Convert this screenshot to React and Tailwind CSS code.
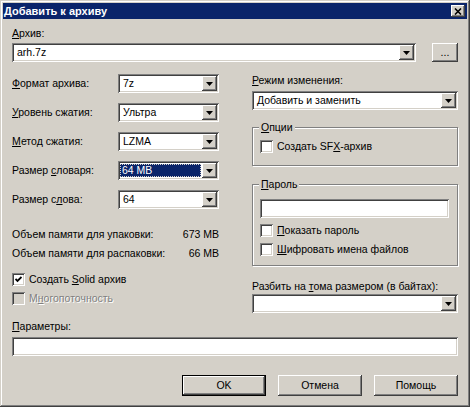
import React from "react";

// classic win2000 3d edges
const sunken =
  "shadow-[inset_1px_1px_0_#808080,inset_-1px_-1px_0_#ffffff,inset_2px_2px_0_#404040,inset_-2px_-2px_0_#d4d0c8]";
const raised =
  "shadow-[inset_-1px_-1px_0_#404040,inset_1px_1px_0_#ffffff,inset_-2px_-2px_0_#808080,inset_2px_2px_0_#d4d0c8]";

const Arrow = () => (
  <svg width="7" height="4" viewBox="0 0 7 4">
    <path d="M0 0h7L3.5 4z" fill="#000" />
  </svg>
);

const ComboBox = ({ value, selected, className }) => (
  <div className={`flex h-[19px] bg-white p-[2px] ${sunken} ${className || ""}`}>
    {selected ? (
      <div className="flex-1 flex items-center my-[1px] mr-[1px] pl-[2px] bg-[#0a246a] text-white outline outline-1 outline-dotted outline-[#d4d0c8] -outline-offset-1">
        {value}
      </div>
    ) : (
      <div className="flex-1 flex items-center pl-[3px]">{value}</div>
    )}
    <div className={`w-[15px] flex items-center justify-center bg-[#d4d0c8] ${raised}`}>
      <Arrow />
    </div>
  </div>
);

const TextField = ({ className }) => (
  <div className={`h-[19px] bg-white ${sunken} ${className || ""}`} />
);

const CheckBox = ({ checked, disabled, children }) => (
  <div className="flex items-center gap-[4px] h-[13px]">
    <span
      className={`w-[13px] h-[13px] flex items-center justify-center ${disabled ? "bg-[#d4d0c8]" : "bg-white"} ${sunken}`}
    >
      {checked && (
        <svg width="7" height="7" viewBox="0 0 7 7">
          <path d="M0.5 3 L2.5 5 L6.5 1" stroke="#000" strokeWidth="1.8" fill="none" />
        </svg>
      )}
    </span>
    <span className={disabled ? "text-[#808080] [text-shadow:1px_1px_0_#fff]" : ""}>{children}</span>
  </div>
);

const GroupBox = ({ title, className, children }) => (
  <div
    className={`relative border border-[#808080] shadow-[inset_1px_1px_0_#ffffff,1px_1px_0_#ffffff] ${className || ""}`}
  >
    <span className="absolute top-[-7px] left-[6px] px-[2px] bg-[#d4d0c8] leading-[13px]">{title}</span>
    {children}
  </div>
);

const Button = ({ children, isDefault }) =>
  isDefault ? (
    <div className="w-[84px] h-[21px] border border-black">
      <div className={`w-full h-full flex items-center justify-center ${raised}`}>{children}</div>
    </div>
  ) : (
    <div className={`w-[84px] h-[21px] flex items-center justify-center ${raised}`}>{children}</div>
  );

const leftRows = [
  { label: <><u>Ф</u>ормат архива:</>, value: "7z" },
  { label: <><u>У</u>ровень сжатия:</>, value: "Ультра" },
  { label: <><u>М</u>етод сжатия:</>, value: "LZMA" },
  { label: <>Размер <u>с</u>ловаря:</>, value: "64 MB", selected: true },
  { label: <>Размер с<u>л</u>ова:</>, value: "64" },
];

export default function App() {
  return (
    <div
      className={`w-[470px] h-[407px] bg-[#d4d0c8] p-[2px] text-black text-[10.5px] leading-[13px] font-['Liberation_Sans',Arial,sans-serif] shadow-[inset_-1px_-1px_0_#404040,inset_1px_1px_0_#d4d0c8,inset_-2px_-2px_0_#808080,inset_2px_2px_0_#ffffff]`}
    >
      {/* title bar */}
      <div className="flex items-center justify-between h-[16px] mx-[1px] mt-[1px] pl-[1px] pr-[2px] bg-[#0a246a]">
        <span className="text-white font-bold text-[11px]">Добавить к архиву</span>
        <div className={`w-[14px] h-[12px] flex items-center justify-center bg-[#d4d0c8] ${raised}`}>
          <svg width="8" height="7" viewBox="0 0 8 7">
            <path d="M1 0.5 L7 6.5 M7 0.5 L1 6.5" stroke="#000" strokeWidth="1.6" />
          </svg>
        </div>
      </div>

      <div className="px-[10px]">
        <div className="mt-[8px] h-[13px]">
          <u>А</u>рхив:
        </div>
        <div className="mt-[3px] flex justify-between">
          <ComboBox value="arh.7z" className="w-[404px]" />
          <div className={`w-[26px] h-[19px] flex items-center justify-center ${raised}`}>...</div>
        </div>

        <div className="mt-[12px] grid grid-cols-[207px_206px] gap-x-[33px]">
          {/* left column */}
          <div className="flex flex-col">
            <div className="flex flex-col gap-[10px]">
              {leftRows.map((r, i) => (
                <div key={i} className="flex items-center justify-between h-[19px]">
                  <span>{r.label}</span>
                  <ComboBox value={r.value} selected={r.selected} className="w-[101px]" />
                </div>
              ))}
            </div>
            <div className="mt-[19px] flex justify-between h-[13px]">
              <span>Объем памяти для упаковки:</span>
              <span>673 MB</span>
            </div>
            <div className="mt-[6px] flex justify-between h-[13px]">
              <span>Объем памяти для распаковки:</span>
              <span>66 MB</span>
            </div>
            <div className="mt-[13px]">
              <CheckBox checked>
                Создать <u>S</u>olid архив
              </CheckBox>
            </div>
            <div className="mt-[6px]">
              <CheckBox disabled>
                М<u>н</u>огопоточность
              </CheckBox>
            </div>
          </div>

          {/* right column */}
          <div className="flex flex-col">
            <div className="h-[13px]">
              <u>Р</u>ежим изменения:
            </div>
            <ComboBox value="Добавить и заменить" className="mt-[4px]" />
            <GroupBox title={<><u>О</u>пции</>} className="mt-[17px] h-[39px] pt-[12px] pl-[7px]">
              <CheckBox>
                Создать SF<u>X</u>-архив
              </CheckBox>
            </GroupBox>
            <GroupBox title={<><u>П</u>ароль</>} className="mt-[18px] h-[82px] pt-[14px] pl-[7px] pr-[8px]">
              <TextField />
              <div className="mt-[6px]">
                <CheckBox>
                  <u>П</u>оказать пароль
                </CheckBox>
              </div>
              <div className="mt-[6px]">
                <CheckBox>
                  <u>Ш</u>ифровать имена файлов
                </CheckBox>
              </div>
            </GroupBox>
            <div className="mt-[14px] h-[13px]">
              Разбить на <u>т</u>ома размером (в байтах):
            </div>
            <ComboBox value="" className="mt-[1px]" />
          </div>
        </div>

        <div className="mt-[7px] h-[13px]">
          <u>П</u>араметры:
        </div>
        <TextField className="mt-[4px]" />

        <div className="mt-[19px] flex justify-end gap-[12px]">
          <Button isDefault>OK</Button>
          <Button>Отмена</Button>
          <Button>Помощь</Button>
        </div>
      </div>
    </div>
  );
}
